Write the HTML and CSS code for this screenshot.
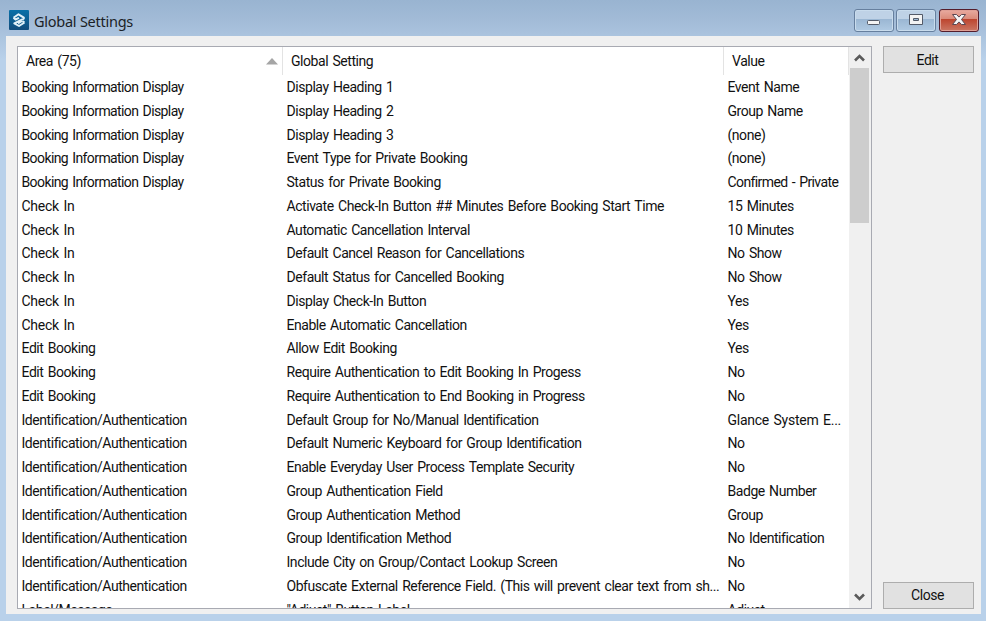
FILE: index.html
```html
<!DOCTYPE html>
<html lang="en">
<head>
<meta charset="utf-8">
<title>Global Settings</title>
<link rel="stylesheet" href="styles.css">
</head>
<body>
<div class="window">
  <header class="titlebar">
    <svg class="logo" width="20" height="20" viewBox="0 0 20 20">
      <defs><linearGradient id="lg" x1="0" y1="0" x2="0" y2="1"><stop offset="0" stop-color="#0870a8"/><stop offset="1" stop-color="#124c7c"/></linearGradient></defs>
      <rect width="20" height="20" rx="1" fill="url(#lg)"/>
      <path d="M4.500 7.800L9.500 4.300L14.800 7.600V8.600L5.300 13.300L10 16L15.500 12.500M4.500 7.800L6.500 9.500L10 7.800M13.500 11.200L15.500 12.500M9 13.300L13 11" fill="none" stroke="#e2f1f8" stroke-width="2" stroke-linejoin="round"/>
    </svg>
    <h1 class="title">Global Settings</h1>
    <div class="controls">
      <span class="control"><svg width="38" height="21" viewBox="0 0 38 21"><rect x="12.500" y="10.500" width="12" height="4" rx="1" fill="#f3f3f3" stroke="#535a68"/></svg></span>
      <span class="control"><svg width="38" height="21" viewBox="0 0 38 21"><path d="M12.500 4.500h13v10h-13zM16.500 8.500v2h5v-2z" fill="#f3f3f3" fill-rule="evenodd" stroke="#535a68"/></svg></span>
      <span class="control control-close"><svg width="38" height="21" viewBox="0 0 38 21"><path d="M12.500 4.500h4l2.500 2.600 2.500-2.600h4l-4 5 4 5h-4L19 11.900l-2.500 2.600h-4l4-5z" fill="#f5f5f5" stroke="#5b4650"/></svg></span>
    </div>
  </header>
  <main class="client">
    <section class="list">
      <div class="table">
        <div class="head"><span>Area (75)<svg class="sort" width="12" height="7" viewBox="0 0 12 7"><path d="M0 6.5L6 0l6 6.500z" fill="#a5a5a5"/></svg></span><span>Global Setting</span><span>Value</span></div>
        <div class="row"><span class="tight">Booking Information Display</span><span>Display Heading 1</span><span>Event Name</span></div>
        <div class="row"><span class="tight">Booking Information Display</span><span>Display Heading 2</span><span>Group Name</span></div>
        <div class="row"><span class="tight">Booking Information Display</span><span>Display Heading 3</span><span>(none)</span></div>
        <div class="row"><span class="tight">Booking Information Display</span><span>Event Type for Private Booking</span><span>(none)</span></div>
        <div class="row"><span class="tight">Booking Information Display</span><span>Status for Private Booking</span><span class="tight">Confirmed - Private</span></div>
        <div class="row"><span class="loose">Check In</span><span>Activate Check-In Button ## Minutes Before Booking Start Time</span><span>15 Minutes</span></div>
        <div class="row"><span class="loose">Check In</span><span>Automatic Cancellation Interval</span><span>10 Minutes</span></div>
        <div class="row"><span class="loose">Check In</span><span>Default Cancel Reason for Cancellations</span><span>No Show</span></div>
        <div class="row"><span class="loose">Check In</span><span>Default Status for Cancelled Booking</span><span>No Show</span></div>
        <div class="row"><span class="loose">Check In</span><span>Display Check-In Button</span><span>Yes</span></div>
        <div class="row"><span class="loose">Check In</span><span>Enable Automatic Cancellation</span><span>Yes</span></div>
        <div class="row"><span>Edit Booking</span><span>Allow Edit Booking</span><span>Yes</span></div>
        <div class="row"><span>Edit Booking</span><span>Require Authentication to Edit Booking In Progess</span><span>No</span></div>
        <div class="row"><span>Edit Booking</span><span>Require Authentication to End Booking in Progress</span><span>No</span></div>
        <div class="row"><span>Identification/Authentication</span><span>Default Group for No/Manual Identification</span><span class="loose">Glance System E...</span></div>
        <div class="row"><span>Identification/Authentication</span><span>Default Numeric Keyboard for Group Identification</span><span>No</span></div>
        <div class="row"><span>Identification/Authentication</span><span>Enable Everyday User Process Template Security</span><span>No</span></div>
        <div class="row"><span>Identification/Authentication</span><span>Group Authentication Field</span><span>Badge Number</span></div>
        <div class="row"><span>Identification/Authentication</span><span>Group Authentication Method</span><span>Group</span></div>
        <div class="row"><span>Identification/Authentication</span><span>Group Identification Method</span><span>No Identification</span></div>
        <div class="row"><span>Identification/Authentication</span><span>Include City on Group/Contact Lookup Screen</span><span>No</span></div>
        <div class="row"><span>Identification/Authentication</span><span>Obfuscate External Reference Field. (This will prevent clear text from sh...</span><span>No</span></div>
        <div class="row"><span>Label/Message</span><span>"Adjust" Button Label</span><span>Adjust</span></div>
      </div>
      <div class="scrollbar">
        <svg class="arrow" width="19" height="21" viewBox="0 0 19 21"><path d="M5 13.5L9.5 9l4.500 4.500" fill="none" stroke="#5a5a5a" stroke-width="2.600"/></svg>
        <div class="thumb"></div>
        <svg class="arrow" width="19" height="21" viewBox="0 0 19 21"><path d="M5 7.500L9.500 12l4.500-4.500" fill="none" stroke="#5a5a5a" stroke-width="2.600"/></svg>
      </div>
    </section>
    <aside class="actions">
      <button class="button">Edit</button>
      <button class="button">Close</button>
    </aside>
  </main>
</div>
</body>
</html>
```
FILE: styles.css
```css
* { box-sizing: border-box; }
body { margin: 0; }
.window {
  width: 986px;
  height: 621px;
  padding: 0 5px 7px 6px;
  display: flex;
  flex-direction: column;
  overflow: hidden;
  background: linear-gradient(#99b4d1 0, #a2bbd7 20px, #b9d1ea 60px, #b9d1ea 100%);
  font-family: Roboto, "Liberation Sans", sans-serif;
  font-size: 14px;
  letter-spacing: -0.45px;
  word-spacing: 1.3px;
  color: #111;
}
.titlebar {
  height: 36px;
  display: flex;
  align-items: flex-start;
  padding-left: 3px;
}
.logo { margin-top: 10px; }
.title {
  margin: 10px 0 0 5px;
  font: 14.5px/22px "Noto Sans", sans-serif;
  letter-spacing: -0.25px;
  word-spacing: 0;
  color: #1b1f26;
}
.controls {
  display: flex;
  gap: 3px;
  margin: 9px 2px 0 auto;
}
.control {
  width: 40px;
  height: 23px;
  border: 1px solid #667f9e;
  border-radius: 3px;
  box-shadow: inset 0 0 0 1px #c9dced;
  background: linear-gradient(#bfd2e6 0 45%, #9bb7d3 45%, #b0cae3);
}
.control:first-child { margin-right: -1px; }
.control svg { display: block; }
.control-close {
  border-color: #541d2b;
  box-shadow: inset 0 0 0 1px #e0a096;
  background: linear-gradient(#e9aba0 0, #d98877 45%, #bd4630 45%, #cb7764);
}
.client {
  flex: 1;
  min-height: 0;
  display: flex;
  gap: 11px;
  padding: 10px 7px 5px 11px;
  background: #f0f0f0;
}
.list {
  width: 855px;
  display: flex;
  overflow: hidden;
  border: 1px solid #a8aab2;
  background: #fff;
}
.table { flex: 1; min-width: 0; }
.head, .row {
  display: grid;
  grid-template-columns: 265px 441px 1fr;
}
.head { height: 28px; line-height: 27px; }
.head span {
  display: flex;
  align-items: center;
  justify-content: space-between;
  padding: 0 4px 0 8px;
  border-right: 1px solid #e3e3e3;
}
.row { height: 23.76px; line-height: 24px; white-space: nowrap; }
.row span { padding-left: 3.5px; }
.row .tight { letter-spacing: -0.6px; }
.row .loose { letter-spacing: -0.25px; }
.scrollbar {
  width: 22px;
  padding: 0 2px 0 1px;
  display: flex;
  flex-direction: column;
  background: #f0f0f0;
}
.arrow { flex: none; }
.thumb { height: 155px; margin-bottom: auto; background: #cdcdcd; }
.actions {
  flex: 1;
  display: flex;
  flex-direction: column;
  justify-content: space-between;
}
.button {
  height: 27px;
  padding: 0 2px 0 0;
  border: 1px solid #adadad;
  border-radius: 0;
  background: #e1e1e1;
  font: inherit;
  letter-spacing: inherit;
  color: inherit;
}
.button:last-child { padding-bottom: 2px; }
```
